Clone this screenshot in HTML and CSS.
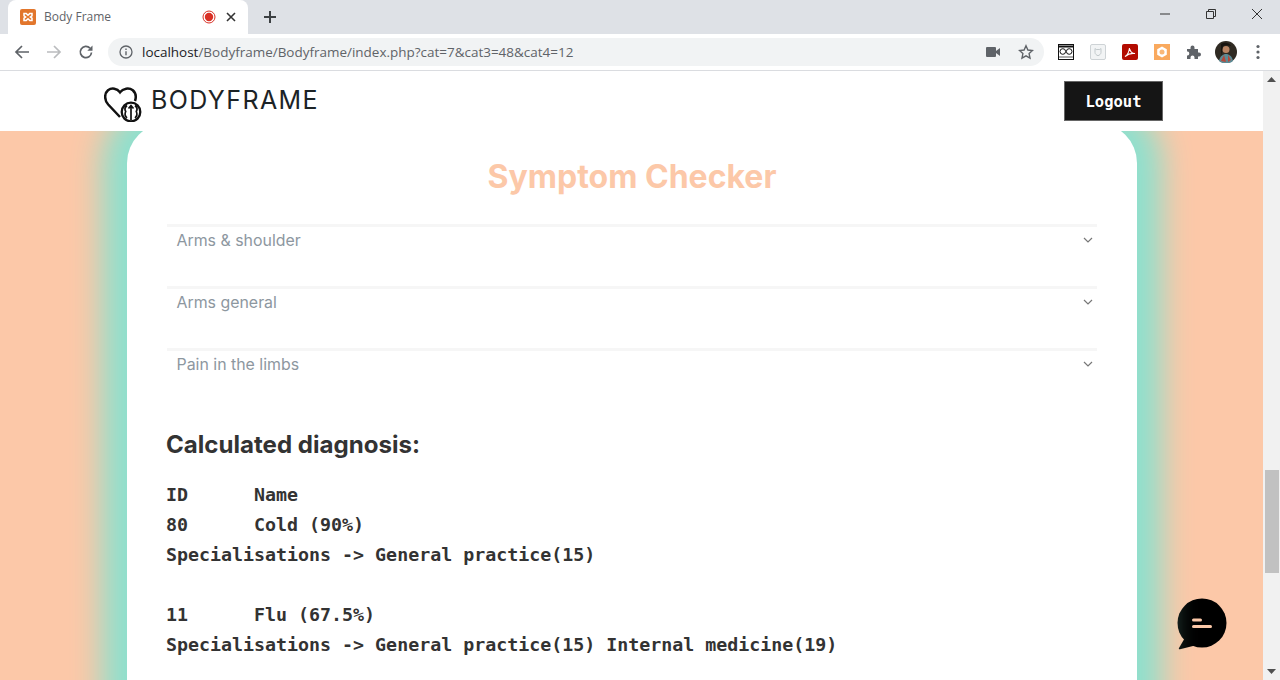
FILE: index.html
```html
<!DOCTYPE html>
<html lang="en">
<head>
  <meta charset="UTF-8">
  <meta name="viewport" content="width=device-width, initial-scale=1.0">
  <title>Body Frame</title>
  <link rel="stylesheet" href="styles.css">
</head>
<body>
  <div class="tabstrip">
    <div class="tab">
      <svg class="favicon" width="16" height="16" viewBox="0 0 16 16">
        <rect width="16" height="16" rx="2" fill="#e2762c"/>
        <path d="M4 4.500h2.200L8 6.300l1.800-1.800H12v2.400L10.400 8l1.600 1.200v2.300H9.800L8 9.700l-1.800 1.800H4V9.200L5.600 8 4 6.900z" fill="none" stroke="#fff" stroke-width="1.500"/>
      </svg>
      <span class="tab-title">Body Frame</span>
      <svg class="tab-rec" width="14" height="14" viewBox="0 0 14 14">
        <circle cx="7" cy="7" r="6" fill="none" stroke="#d93025" stroke-width="1"/>
        <circle cx="7" cy="7" r="4.200" fill="#d93025"/>
      </svg>
      <svg class="tab-close" width="10" height="10" viewBox="0 0 10 10">
        <path d="M1 1l8 8M9 1l-8 8" stroke="#333" stroke-width="1.600"/>
      </svg>
    </div>
    <svg class="new-tab" width="14" height="14" viewBox="0 0 14 14">
      <path d="M7 1v12M1 7h12" stroke="#3c4043" stroke-width="2"/>
    </svg>
    <div class="window-btns">
      <svg width="12" height="12" viewBox="0 0 12 12"><path d="M1 6h10" stroke="#333" stroke-width="1"/></svg>
      <svg width="12" height="12" viewBox="0 0 12 12"><path d="M1.500 3.500h7v7h-7zM3.500 3.500v-2h7v7h-2" fill="none" stroke="#333" stroke-width="1"/></svg>
      <svg width="12" height="12" viewBox="0 0 12 12"><path d="M1 1l10 10M11 1L1 11" stroke="#333" stroke-width="1"/></svg>
    </div>
  </div>

  <div class="toolbar">
    <svg class="nav-icon" width="16" height="16" viewBox="0 0 16 16"><path d="M15 8H2M8 2L2 8l6 6" fill="none" stroke="#5f6368" stroke-width="1.700"/></svg>
    <svg class="nav-icon" width="16" height="16" viewBox="0 0 16 16"><path d="M1 8h13M8 2l6 6-6 6" fill="none" stroke="#babcbe" stroke-width="1.700"/></svg>
    <svg class="nav-icon" width="16" height="16" viewBox="0 0 16 16"><path d="M13.500 8.500A5.600 5.600 0 1 1 12 4.200" fill="none" stroke="#5f6368" stroke-width="1.700"/><path d="M14.500 1.500v5.200H9.300z" fill="#5f6368"/></svg>
    <div class="omnibox">
      <svg width="14" height="14" viewBox="0 0 14 14"><circle cx="7" cy="7" r="6" fill="none" stroke="#5f6368" stroke-width="1.300"/><path d="M7 6.200v4M7 3.600v1.500" stroke="#5f6368" stroke-width="1.400"/></svg>
      <span class="url"><span class="url-host">localhost</span>/Bodyframe/Bodyframe/index.php?cat=7&amp;cat3=48&amp;cat4=12</span>
      <svg class="omni-cam" width="14" height="10" viewBox="0 0 14 10"><rect width="10" height="10" rx="1" fill="#5f6368"/><path d="M10 4l4-3v8l-4-3z" fill="#5f6368"/></svg>
      <svg class="omni-star" width="16" height="16" viewBox="0 0 16 16"><path d="M8 1.800l1.900 4.200 4.600.5-3.400 3.100.9 4.500L8 11.800l-4 2.300.9-4.500L1.500 6.500l4.600-.5z" fill="none" stroke="#5f6368" stroke-width="1.400"/></svg>
    </div>
    <div class="extensions">
      <svg width="16" height="16" viewBox="0 0 16 16"><rect x=".5" y=".5" width="15" height="15" fill="#fff" stroke="#111"/><path d="M1 2.500h14" stroke="#111" stroke-width="2"/><circle cx="4.800" cy="7.500" r="2.800" fill="none" stroke="#111"/><circle cx="11.200" cy="7.500" r="2.800" fill="none" stroke="#111"/><path d="M1 13h14" stroke="#555"/></svg>
      <svg width="16" height="16" viewBox="0 0 16 16"><rect x=".5" y=".5" width="15" height="15" rx="1.500" fill="#f2f4f5" stroke="#ced3d6"/><path d="M5 4.500l1.200 1h3.600l1.200-1v4c0 1.500-1.500 2.700-3 3.200-1.500-.5-3-1.700-3-3.200z" fill="none" stroke="#c2c9cc"/></svg>
      <svg width="16" height="16" viewBox="0 0 16 16"><rect width="16" height="16" rx="2" fill="#b30b00"/><path d="M3 12.500c2-1 4-5 4.500-8.500.5 3 2.500 5.500 5.500 5.500-3-.5-7 .5-10 3z" fill="none" stroke="#fff" stroke-width="1.100"/></svg>
      <svg width="16" height="16" viewBox="0 0 16 16"><rect width="16" height="16" fill="#f9a95e"/><path d="M8 2.500l4.800 2.700v5.600L8 13.500l-4.800-2.700V5.200z" fill="#fff"/><circle cx="8" cy="8" r="2.500" fill="#f9b878"/></svg>
      <svg width="16" height="16" viewBox="0 0 16 16"><path d="M1 5h3.500V3.500a2 2 0 0 1 4 0V5H12v3.500h1a2 2 0 0 1 0 4h-1V15H8.500v-1.500a2 2 0 0 0-4 0V15H1v-3.500h1a2.200 2.200 0 0 0 0-4H1z" fill="#5f6368"/></svg>
      <svg class="avatar" width="22" height="22" viewBox="0 0 22 22"><circle cx="11" cy="11" r="11" fill="#2f2a22"/><circle cx="11" cy="8.500" r="3.500" fill="#b98462"/><path d="M6 3c3-2 8-1.500 10 2-3-1-6-1-8 0-1 3-1 7-2 10z" fill="#17130f"/><path d="M4 20c1-5 4-7 7-7s6 2 7 7a11 11 0 0 1-14 0z" fill="#5c8a94"/><path d="M6 20l3-6 2 7zM13 14l3 5-3 2z" fill="#b5483a"/></svg>
      <svg class="kebab" width="4" height="16" viewBox="0 0 4 16"><circle cx="2" cy="2.500" r="1.600" fill="#5f6368"/><circle cx="2" cy="8" r="1.600" fill="#5f6368"/><circle cx="2" cy="13.500" r="1.600" fill="#5f6368"/></svg>
    </div>
  </div>

  <div class="viewport">
    <div class="page">
      <nav class="navbar">
        <div class="brand">
          <svg width="38" height="38" viewBox="0 0 38 38">
            <path d="M16 33L4.200 20.500C.2 16 .2 9.500 4 6.300c3.800-3 9-2 12 2 3-4 9-5 12.800-2 3 2.700 3.500 7 2.200 10.700" fill="none" stroke="#111" stroke-width="2.500"/>
            <circle cx="27" cy="28" r="9.300" fill="#fff" stroke="#111" stroke-width="2.300"/>
            <path d="M27 36V21.500M24.500 24.500l2.500-3 2.500 3M23 21.500c-2.500 2-2.500 4-1.300 6-1.200 2.500-1 4.500 1.300 6.500M31 21.500c2.500 2 2.500 4 1.300 6 1.200 2.500 1 4.500-1.300 6.500" fill="none" stroke="#111" stroke-width="1.700"/>
          </svg>
          <span class="brand-name">BODYFRAME</span>
        </div>
        <button class="btn-logout">Logout</button>
      </nav>

      <main class="card">
        <h1 class="card-title">Symptom Checker</h1>

        <div class="accordion-row">
          <span>Arms &amp; shoulder</span>
          <svg width="10" height="6" viewBox="0 0 10 6"><path d="M1 1l4 4 4-4" fill="none" stroke="#777" stroke-width="1.200"/></svg>
        </div>
        <div class="accordion-row">
          <span>Arms general</span>
          <svg width="10" height="6" viewBox="0 0 10 6"><path d="M1 1l4 4 4-4" fill="none" stroke="#777" stroke-width="1.200"/></svg>
        </div>
        <div class="accordion-row">
          <span>Pain in the limbs</span>
          <svg width="10" height="6" viewBox="0 0 10 6"><path d="M1 1l4 4 4-4" fill="none" stroke="#777" stroke-width="1.200"/></svg>
        </div>

        <h2 class="result-title">Calculated diagnosis:</h2>
        <pre class="result-list">ID	Name
80	Cold (90%)
Specialisations -&gt; General practice(15)

11	Flu (67.5%)
Specialisations -&gt; General practice(15) Internal medicine(19)</pre>
      </main>
    </div>

    <div class="scrollbar">
      <svg width="9" height="5" viewBox="0 0 9 5"><path d="M4.500 0L9 5H0z" fill="#505050"/></svg>
      <div class="scroll-track"><div class="scroll-thumb"></div></div>
      <svg width="9" height="5" viewBox="0 0 9 5"><path d="M0 0h9L4.500 5z" fill="#505050"/></svg>
    </div>

    <div class="chat-btn">
      <svg width="50" height="52" viewBox="0 0 50 52">
        <circle cx="25" cy="25" r="24.500" fill="#000"/>
        <path d="M9 38l-7 12c-.5 1 0 1.500 1 1.300L20 47z" fill="#000"/>
        <rect x="15" y="20.500" width="10" height="3" rx="1.500" fill="#fcc8a8"/>
        <rect x="15" y="27" width="20" height="3" rx="1.500" fill="#fcc8a8"/>
      </svg>
    </div>
  </div>
</body>
</html>
```
FILE: styles.css
```css
* {
  box-sizing: border-box;
}

html, body {
  margin: 0;
  height: 100%;
}

body {
  display: flex;
  flex-direction: column;
  height: 100vh;
  overflow: hidden;
  font-family: "Inter", sans-serif;
  background-color: #ffffff;
}

/* browser chrome */
.tabstrip {
  display: flex;
  align-items: center;
  height: 34px;
  flex-shrink: 0;
  background-color: #dee1e6;
}

.tab {
  display: flex;
  align-items: center;
  width: 240px;
  height: 34px;
  margin-left: 8px;
  padding: 0 11px 0 12px;
  background-color: #ffffff;
  border-radius: 8px 8px 0 0;
}

.tab-title {
  flex: 1;
  margin-left: 8px;
  margin-top: -2px;
  font-family: "Open Sans", sans-serif;
  font-size: 12px;
  color: #5f6368;
}

.tab-close {
  margin-left: 10px;
  margin-right: 1px;
}

.new-tab {
  margin-left: 15px;
}

.window-btns {
  display: flex;
  gap: 34px;
  margin-left: auto;
  margin-right: 17px;
  margin-top: -7px;
}

.toolbar {
  display: flex;
  align-items: center;
  height: 37px;
  flex-shrink: 0;
  padding: 0 0 1px 14px;
  background-color: #ffffff;
  border-bottom: 1px solid #dadce0;
}

.nav-icon {
  margin-right: 16px;
}

.omnibox {
  display: flex;
  align-items: center;
  width: 936px;
  height: 28px;
  margin-left: -2px;
  padding: 0 10px 0 11px;
  background-color: #f1f3f4;
  border-radius: 14px;
}

.url {
  flex: 1;
  margin-left: 9px;
  font-family: "Open Sans", sans-serif;
  font-size: 13.47px;
  color: #5f6368;
  white-space: nowrap;
}

.url-host {
  color: #202124;
}

.omni-cam {
  margin-right: 18px;
}

.extensions {
  display: flex;
  align-items: center;
  gap: 16px;
  margin-left: 14px;
}

.avatar {
  margin-left: -3px;
  margin-right: -2px;
}

.kebab {
  margin-left: 5px;
}

/* page */
.viewport {
  position: relative;
  display: flex;
  flex: 1;
  min-height: 0;
}

.page {
  flex: 1;
  min-width: 0;
  overflow: hidden;
  background-color: #fcc8a8;
}

.navbar {
  position: relative;
  z-index: 2;
  display: flex;
  align-items: center;
  justify-content: space-between;
  height: 60px;
  padding: 0 100px 0 104px;
  background-color: #ffffff;
}

.brand {
  display: flex;
  align-items: center;
  gap: 9px;
  margin-top: 4px;
}

.brand-name {
  font-size: 25px;
  letter-spacing: 1.4px;
  color: #1c2326;
  margin-top: -6px;
}

.btn-logout {
  width: 99px;
  height: 40px;
  padding: 2px 0 0;
  font-family: "DejaVu Sans Mono", monospace;
  font-size: 15.5px;
  font-weight: bold;
  color: #ffffff;
  background-color: #151515;
  border: 1px solid #666666;
}

.card {
  position: relative;
  z-index: 1;
  width: 1010px;
  height: 700px;
  margin: -8px 0 0 127px;
  padding: 33px 40px 0;
  background-color: #ffffff;
  border-radius: 40px;
  box-shadow: 0 0 30px 25px #8ee0ce;
}

.card-title {
  margin: 0 0 26px;
  font-size: 32px;
  line-height: 42px;
  font-weight: 700;
  color: #fcc8a8;
  text-align: center;
}

.accordion-row {
  display: flex;
  align-items: flex-start;
  justify-content: space-between;
  height: 62px;
  padding: 3px 4px 0 9.5px;
  font-size: 15.9px;
  line-height: 22px;
  color: #8d979f;
  border-top: 3px solid #f6f6f6;
}

.accordion-row svg {
  margin-top: 7px;
}

.result-title {
  margin: 18px 0 0 -1px;
  font-size: 24.1px;
  line-height: 34px;
  font-weight: 700;
  color: #333333;
}

.result-list {
  margin: 18px 0 0 -1px;
  font-family: "DejaVu Sans Mono", monospace;
  font-size: 18.29px;
  line-height: 30px;
  font-weight: bold;
  color: #333333;
  tab-size: 8;
}

/* fake scrollbar */
.scrollbar {
  display: flex;
  flex-direction: column;
  align-items: center;
  width: 17px;
  flex-shrink: 0;
  padding: 6px 0;
  background-color: #f1f1f1;
}

.scroll-track {
  flex: 1;
  width: 100%;
  padding-top: 388px;
}

.scroll-thumb {
  height: 103px;
  margin: 0 1px 0 2px;
  background-color: #c1c1c1;
}

.chat-btn {
  position: absolute;
  top: 527px;
  left: 1177px;
}
```
